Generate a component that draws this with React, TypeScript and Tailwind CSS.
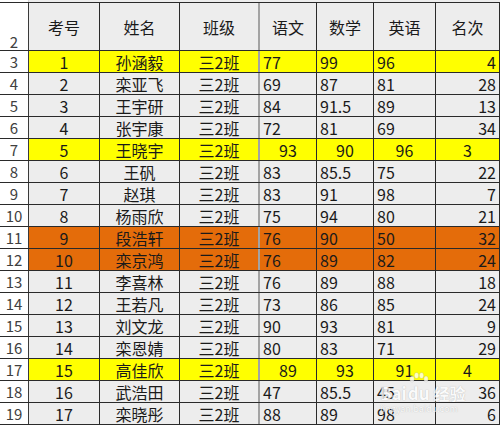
const FONT = "font-['Noto_Sans_CJK_SC','Noto_Sans',sans-serif]";

type Row = {
  n: number;
  id: string;
  name: string;
  cls: string;
  s: [string, string, string];
  rank: string;
  fill?: "yellow" | "orange";
  center?: boolean;
};

const rows: Row[] = [
  { n: 3, id: "1", name: "孙涵毅", cls: "三2班", s: ["77", "99", "96"], rank: "4", fill: "yellow" },
  { n: 4, id: "2", name: "栾亚飞", cls: "三2班", s: ["69", "87", "81"], rank: "28" },
  { n: 5, id: "3", name: "王宇研", cls: "三2班", s: ["84", "91.5", "89"], rank: "13" },
  { n: 6, id: "4", name: "张宇康", cls: "三2班", s: ["72", "81", "69"], rank: "34" },
  { n: 7, id: "5", name: "王晓宇", cls: "三2班", s: ["93", "90", "96"], rank: "3", fill: "yellow", center: true },
  { n: 8, id: "6", name: "王矾", cls: "三2班", s: ["83", "85.5", "75"], rank: "22" },
  { n: 9, id: "7", name: "赵琪", cls: "三2班", s: ["83", "91", "98"], rank: "7" },
  { n: 10, id: "8", name: "杨雨欣", cls: "三2班", s: ["75", "94", "80"], rank: "21" },
  { n: 11, id: "9", name: "段浩轩", cls: "三2班", s: ["76", "90", "50"], rank: "32", fill: "orange" },
  { n: 12, id: "10", name: "栾京鸿", cls: "三2班", s: ["76", "89", "82"], rank: "24", fill: "orange" },
  { n: 13, id: "11", name: "李喜林", cls: "三2班", s: ["76", "89", "88"], rank: "18" },
  { n: 14, id: "12", name: "王若凡", cls: "三2班", s: ["73", "86", "85"], rank: "24" },
  { n: 15, id: "13", name: "刘文龙", cls: "三2班", s: ["90", "93", "81"], rank: "9" },
  { n: 16, id: "14", name: "栾恩婧", cls: "三2班", s: ["80", "83", "71"], rank: "29" },
  { n: 17, id: "15", name: "高佳欣", cls: "三2班", s: ["89", "93", "91"], rank: "4", fill: "yellow", center: true },
  { n: 18, id: "16", name: "武浩田", cls: "三2班", s: ["47", "85.5", "45"], rank: "36" },
  { n: 19, id: "17", name: "栾晓彤", cls: "三2班", s: ["88", "89", "98"], rank: "6" },
];

const headers = ["考号", "姓名", "班级", "语文", "数学", "英语", "名次"];
const widths = ["w-[71px]", "w-[80px]", "w-[80px]", "w-[57px]", "w-[57px]", "w-[62px]", "w-[64px]"];

function RowHead({ n, tall }: { n: number; tall?: boolean }) {
  return (
    <div
      className={`flex w-[29px] shrink-0 justify-center border-r border-r-[#3a3a3a] bg-white text-[15px] text-[#404040] ${
        tall ? "items-end pb-[1px]" : "items-center"
      }`}
    >
      {n}
    </div>
  );
}

export default function App() {
  return (
    <div className={`relative h-[425px] w-[500px] overflow-hidden bg-white ${FONT} text-[16px] leading-none text-[#1a1a1a]`}>
      {/* sliver of row 1 */}
      <div className="flex h-[2px]">
        <div className="w-[29px] border-r border-r-[#d6d6d6] bg-white" />
        <div className="flex-1 bg-[#ededed]" />
      </div>

      {/* header row 2 */}
      <div className="flex h-[49px] border-y border-[#2a2a2a]">
        <RowHead n={2} tall />
        {headers.map((h, i) => (
          <div
            key={h}
            className={`${widths[i]} flex shrink-0 items-center justify-center bg-[#ededed] ${
              i === 2 ? "border-r-2 border-r-[#a3a3a3]" : "border-r border-r-[#2a2a2a]"
            }`}
          >
            {h}
          </div>
        ))}
      </div>

      {rows.map((r) => {
        const bg =
          r.fill === "yellow" ? "bg-[#ffff00]" : r.fill === "orange" ? "bg-[#e46c0a]" : "bg-[#ededed]";
        return (
          <div key={r.n} className="flex h-[22px] border-b border-[#2a2a2a]">
            <RowHead n={r.n} />
            <div className={`${widths[0]} ${bg} flex shrink-0 items-center justify-center border-r border-r-[#2a2a2a]`}>
              {r.id}
            </div>
            <div className={`${widths[1]} ${bg} flex shrink-0 items-center justify-center border-r border-r-[#2a2a2a]`}>
              {r.name}
            </div>
            <div className={`${widths[2]} ${bg} flex shrink-0 items-center justify-center border-r-2 border-r-[#a3a3a3]`}>
              {r.cls}
            </div>
            {r.s.map((v, i) => (
              <div
                key={i}
                className={`${widths[3 + i]} ${bg} flex shrink-0 items-center border-r border-r-[#2a2a2a] ${
                  r.center ? "justify-center" : "justify-start pl-[3px]"
                }`}
              >
                {v}
              </div>
            ))}
            <div
              className={`${widths[6]} ${bg} flex shrink-0 items-center border-r border-r-[#2a2a2a] ${
                r.center ? "justify-center" : "justify-end pr-[3px]"
              }`}
            >
              {r.rank}
            </div>
          </div>
        );
      })}

      {/* watermark */}
      <div className="pointer-events-none absolute left-[380px] top-[372px] flex flex-col items-start opacity-75">
        <div className="flex items-end text-[17px] font-bold text-white [text-shadow:0_0_1px_rgba(0,0,0,0.35)]">
          <span className="mt-[12px]">Bai</span>
          <span className="relative ml-[1px] pt-[12px]">
            <svg width="22" height="13" viewBox="0 0 22 13" className="absolute left-0 top-0">
              <g fill="#ffffff" stroke="rgba(0,0,0,0.2)" strokeWidth="0.6">
                <ellipse cx="4" cy="7" rx="2.3" ry="3" />
                <ellipse cx="8.5" cy="3.5" rx="2.2" ry="3" />
                <ellipse cx="13.5" cy="3.5" rx="2.2" ry="3" />
                <ellipse cx="18" cy="7" rx="2.2" ry="3" />
              </g>
            </svg>
            du
          </span>
          <span className="ml-[4px] text-[16px]">经验</span>
        </div>
        <div className="mt-[3px] text-[9px] text-white [text-shadow:0_0_1px_rgba(0,0,0,0.35)]">jingyan.baidu.com</div>
      </div>
    </div>
  );
}
